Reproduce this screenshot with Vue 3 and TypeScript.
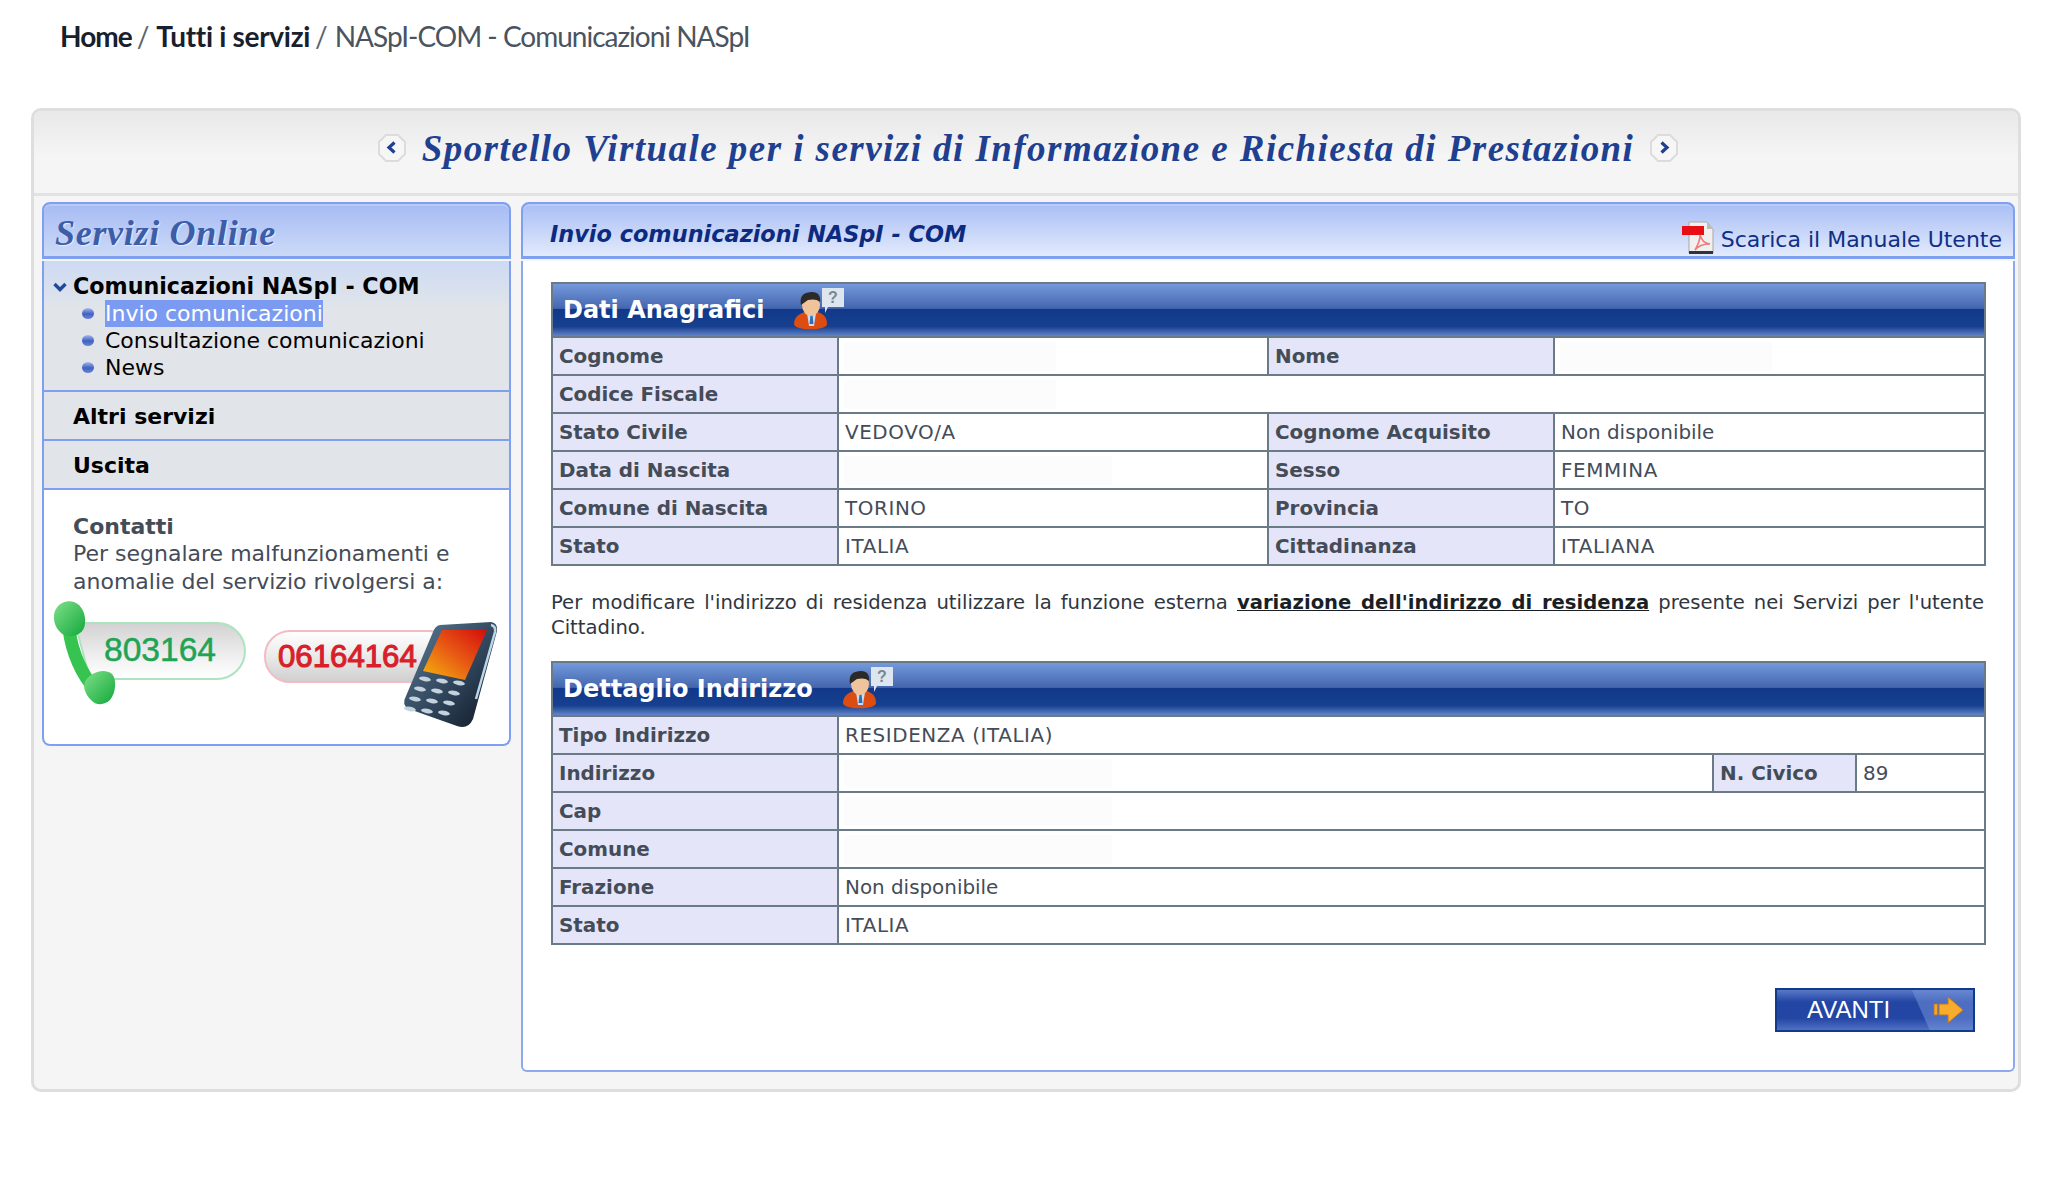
<script setup lang="ts">
interface Cell { t: string; kind: 'label' | 'value' | 'blank'; span?: number; w?: number; caps?: boolean }

const anagrafici: Cell[][] = [
  [{ t: 'Cognome', kind: 'label' }, { t: '', kind: 'blank', w: 212 }, { t: 'Nome', kind: 'label' }, { t: '', kind: 'blank', w: 212 }],
  [{ t: 'Codice Fiscale', kind: 'label' }, { t: '', kind: 'blank', span: 3, w: 212 }],
  [{ t: 'Stato Civile', kind: 'label' }, { t: 'VEDOVO/A', kind: 'value', caps: true }, { t: 'Cognome Acquisito', kind: 'label' }, { t: 'Non disponibile', kind: 'value' }],
  [{ t: 'Data di Nascita', kind: 'label' }, { t: '', kind: 'blank', w: 268 }, { t: 'Sesso', kind: 'label' }, { t: 'FEMMINA', kind: 'value', caps: true }],
  [{ t: 'Comune di Nascita', kind: 'label' }, { t: 'TORINO', kind: 'value', caps: true }, { t: 'Provincia', kind: 'label' }, { t: 'TO', kind: 'value', caps: true }],
  [{ t: 'Stato', kind: 'label' }, { t: 'ITALIA', kind: 'value', caps: true }, { t: 'Cittadinanza', kind: 'label' }, { t: 'ITALIANA', kind: 'value', caps: true }],
]

const indirizzo: Cell[][] = [
  [{ t: 'Tipo Indirizzo', kind: 'label' }, { t: 'RESIDENZA (ITALIA)', kind: 'value', span: 3, caps: true }],
  [{ t: 'Indirizzo', kind: 'label' }, { t: '', kind: 'blank', w: 268 }, { t: 'N. Civico', kind: 'label' }, { t: '89', kind: 'value' }],
  [{ t: 'Cap', kind: 'label' }, { t: '', kind: 'blank', span: 3, w: 268 }],
  [{ t: 'Comune', kind: 'label' }, { t: '', kind: 'blank', span: 3, w: 268 }],
  [{ t: 'Frazione', kind: 'label' }, { t: 'Non disponibile', kind: 'value', span: 3 }],
  [{ t: 'Stato', kind: 'label' }, { t: 'ITALIA', kind: 'value', span: 3, caps: true }],
]

const keys: { x: number; y: number }[] = []
for (let r = 0; r < 4; r++) {
  for (let c = 0; c < 3; c++) {
    keys.push({ x: 380 + c * 17 - r * 5, y: 80 + c * 2 + r * 10 })
  }
}
</script>

<template>
  <div class="page">
    <nav class="crumbs">
      <strong class="home">Home</strong><span class="sep">/</span>
      <strong class="all">Tutti i servizi</strong><span class="sep">/</span>
      <span class="current">NASpI-COM - Comunicazioni NASpI</span>
    </nav>

    <div class="shell">
      <header class="banner">
        <svg class="nub" viewBox="0 0 28 28">
          <path d="M8 1h12l7 7v12l-7 7H8l-7-7V8z" fill="#f6f6f6" stroke="#dcdcdc" stroke-width="2" />
          <path d="M16.5 8.5 11 13.5l5.500 5" fill="none" stroke="#1f3f90" stroke-width="3.200" />
        </svg>
        <h1>Sportello Virtuale per i servizi di Informazione e Richiesta di Prestazioni</h1>
        <svg class="nub" viewBox="0 0 28 28">
          <path d="M8 1h12l7 7v12l-7 7H8l-7-7V8z" fill="#f6f6f6" stroke="#dcdcdc" stroke-width="2" />
          <path d="M11.500 8.500 17 13.500l-5.500 5" fill="none" stroke="#1f3f90" stroke-width="3.200" />
        </svg>
      </header>

      <div class="columns">
        <aside class="side">
          <div class="side-head">Servizi Online</div>
          <div class="menu">
            <div class="menu-block first">
              <div class="menu-title">
                <svg class="chev" viewBox="0 0 14 10">
                  <path d="M1.500 2 7 7.500 12.500 2" fill="none" stroke="#1f4a9a" stroke-width="3.400" />
                </svg>
                Comunicazioni NASpI - COM
              </div>
              <ul class="sub">
                <li><i class="dot"></i><span class="selected">Invio comunicazioni</span></li>
                <li><i class="dot"></i><span>Consultazione comunicazioni</span></li>
                <li><i class="dot"></i><span>News</span></li>
              </ul>
            </div>
            <div class="menu-block item">Altri servizi</div>
            <div class="menu-block item">Uscita</div>
          </div>
          <div class="contacts">
            <div class="contact-text">
              <strong>Contatti</strong><br />
              Per segnalare malfunzionamenti e<br />
              anomalie del servizio rivolgersi a:
            </div>
            <svg class="phones" viewBox="0 0 460 135">
              <defs>
                <linearGradient id="pill" x1="0" y1="0" x2="0" y2="1">
                  <stop offset="0" stop-color="#d2d2d2" />
                  <stop offset="0.7" stop-color="#f4f4f4" />
                  <stop offset="1" stop-color="#ffffff" />
                </linearGradient>
                <linearGradient id="pillr" x1="0" y1="0" x2="0" y2="1">
                  <stop offset="0" stop-color="#ffffff" />
                  <stop offset="0.45" stop-color="#ececec" />
                  <stop offset="1" stop-color="#cfcfcf" />
                </linearGradient>
                <linearGradient id="gr" x1="0" y1="0" x2="1" y2="1">
                  <stop offset="0" stop-color="#7fe088" />
                  <stop offset="1" stop-color="#12a83c" />
                </linearGradient>
                <linearGradient id="scr" x1="1" y1="0" x2="0" y2="1">
                  <stop offset="0" stop-color="#d40d0d" />
                  <stop offset="0.5" stop-color="#e85a14" />
                  <stop offset="1" stop-color="#f5b70c" />
                </linearGradient>
                <linearGradient id="body" x1="0" y1="0" x2="1" y2="1">
                  <stop offset="0" stop-color="#5e7f98" />
                  <stop offset="0.6" stop-color="#2c4056" />
                  <stop offset="1" stop-color="#0e1620" />
                </linearGradient>
              </defs>
              <path d="M30 24H172A28 28 0 0 1 172 80H45z" fill="url(#pill)" stroke="#aee3bf" stroke-width="2" />
              <text x="59" y="62" class="n-green">803164</text>
              <path d="M24 30C27 54 37 76 50 90" fill="none" stroke="#35c44f" stroke-width="13" />
              <path d="M9 16C10 6 20 0 29 3c8 3 12 12 11 22-1 9-9 13-18 12C14 35 8 26 9 16z" fill="url(#gr)" />
              <path d="M41 81c6-8 18-12 26-6 5 5 4 19-2 26-5 5-14 6-19 0-6-6-9-14-5-20z" fill="url(#gr)" />
              <rect x="220" y="32" width="190" height="51" rx="25" fill="url(#pillr)" stroke="#f3bcc4" stroke-width="2" />
              <text x="233" y="68" class="n-red">06164164</text>
              <path d="M395 26 446 23Q453 24 452 32L428 120Q423 131 412 127L364 110Q356 106 361 97L388 33Q390 27 395 26z" fill="url(#body)" />
              <path d="M446 26Q451 27 450 33L431 100" fill="none" stroke="#bcd6e6" stroke-width="2.500" />
              <path d="M397 31 442 31 420 81 378 72z" fill="url(#scr)" />
              <ellipse
                v-for="(k, i) in keys"
                :key="i"
                :cx="k.x"
                :cy="k.y"
                rx="6"
                ry="2.300"
                fill="#c4d2de"
                :transform="`rotate(10 ${k.x} ${k.y})`"
              />
            </svg>
          </div>
        </aside>

        <main class="main">
          <div class="main-head">
            <span class="main-title">Invio comunicazioni NASpI - COM</span>
            <a class="manual">
              <svg class="pdf" viewBox="0 0 32 33">
                <path d="M7 1h18l6 7v24H7z" fill="#f0f0f0" stroke="#a8a8a8" />
                <path d="M25 1l6 7h-6z" fill="#bdbdbd" />
                <rect x="7" y="30" width="24" height="3" fill="#333" />
                <rect x="0" y="5" width="22" height="9" fill="#e80f14" />
                <path d="M13 29c3-5 5-10 5-15 2 6 4 8 10 9-6 0-12 2-15 6z" fill="none" stroke="#f07a7a" stroke-width="1.600" />
              </svg>
              Scarica il Manuale Utente
            </a>
          </div>

          <div class="main-body">
            <table class="grid">
              <colgroup><col class="c1" /><col class="c2" /><col class="c3" /><col class="c4" /></colgroup>
              <thead>
                <tr>
                  <th colspan="4" class="bar">
                    <div class="bar-inner">
                      <span>Dati Anagrafici</span>
                      <svg class="person" viewBox="0 0 52 42">
                        <path d="M28 0h22v19H34l-3 6 0-6h-3z" fill="#dde6ee" />
                        <text x="39" y="15" class="q">?</text>
                        <path d="M0 36c0-8 7-11 11-12h12c5 1 10 4 10 12 0 7-33 7-33 0z" fill="#dd4d12" />
                        <path d="M13 25h9l-2 13h-5z" fill="#c9dcf0" />
                        <path d="M16.500 27h2l1 9h-4z" fill="#2f6fb8" />
                        <ellipse cx="17" cy="17" rx="9" ry="11" fill="#f0c49a" />
                        <path d="M7 17C5 7 11 4 18 4c6 0 9 4 8 10-3-3-8-3-12-2-2 1-4 3-7 5z" fill="#2c2a28" />
                      </svg>
                    </div>
                  </th>
                </tr>
              </thead>
              <tbody>
                <tr v-for="(row, r) in anagrafici" :key="r">
                  <td v-for="(c, i) in row" :key="i" :colspan="c.span" :class="[c.kind, { caps: c.caps }]">
                    <div v-if="c.kind === 'blank'" class="patch" :style="{ width: c.w + 'px' }"></div>
                    <template v-else>{{ c.t }}</template>
                  </td>
                </tr>
              </tbody>
            </table>

            <div class="note">
              <p class="note-first">
                Per modificare l'indirizzo di residenza utilizzare la funzione esterna
                <a>variazione dell'indirizzo di residenza</a>
                presente nei Servizi per l'utente
              </p>
              <p>Cittadino.</p>
            </div>

            <table class="grid">
              <colgroup><col class="c1" /><col class="d2" /><col class="d3" /><col class="d4" /></colgroup>
              <thead>
                <tr>
                  <th colspan="4" class="bar">
                    <div class="bar-inner">
                      <span>Dettaglio Indirizzo</span>
                      <svg class="person" viewBox="0 0 52 42">
                        <path d="M28 0h22v19H34l-3 6 0-6h-3z" fill="#dde6ee" />
                        <text x="39" y="15" class="q">?</text>
                        <path d="M0 36c0-8 7-11 11-12h12c5 1 10 4 10 12 0 7-33 7-33 0z" fill="#dd4d12" />
                        <path d="M13 25h9l-2 13h-5z" fill="#c9dcf0" />
                        <path d="M16.500 27h2l1 9h-4z" fill="#2f6fb8" />
                        <ellipse cx="17" cy="17" rx="9" ry="11" fill="#f0c49a" />
                        <path d="M7 17C5 7 11 4 18 4c6 0 9 4 8 10-3-3-8-3-12-2-2 1-4 3-7 5z" fill="#2c2a28" />
                      </svg>
                    </div>
                  </th>
                </tr>
              </thead>
              <tbody>
                <tr v-for="(row, r) in indirizzo" :key="r">
                  <td v-for="(c, i) in row" :key="i" :colspan="c.span" :class="[c.kind, { caps: c.caps }]">
                    <div v-if="c.kind === 'blank'" class="patch" :style="{ width: c.w + 'px' }"></div>
                    <template v-else>{{ c.t }}</template>
                  </td>
                </tr>
              </tbody>
            </table>

            <div class="actions">
              <button class="next" type="button">
                <span>AVANTI</span>
                <svg class="arrow" viewBox="0 0 32 28">
                  <path d="M6 8h9V1l15 13-15 13v-8H6z" fill="#f9ab2c" stroke="#b8752a" stroke-width="1" />
                  <rect x="1" y="8" width="3.500" height="11" fill="#f4a62a" stroke="#b8752a" stroke-width="0.800" />
                </svg>
              </button>
            </div>
          </div>
        </main>
      </div>
    </div>
  </div>
</template>

<style scoped>
.page {
  width: 2050px;
  min-height: 1186px;
  background: #fff;
  font-family: "DejaVu Sans", Verdana, sans-serif;
  color: #444c58;
}
.crumbs {
  height: 108px;
  box-sizing: border-box;
  padding: 16px 0 0 60px;
  font-family: Lato, sans-serif;
  font-size: 28px;
  line-height: 40px;
  color: #17202c;
  white-space: nowrap;
}
.crumbs strong { font-weight: 700; }
.crumbs .home { letter-spacing: -1px; }
.crumbs .all { letter-spacing: -0.3px; }
.crumbs .sep { color: #5a6470; margin: 0 7px 0 5px; font-weight: 400; }
.crumbs .current { color: #4a5460; letter-spacing: -1px; }

.shell {
  margin-left: 31px;
  width: 1990px;
  height: 984px;
  box-sizing: border-box;
  border: 3px solid #dedede;
  border-radius: 10px;
  background: #f5f5f5;
  overflow: hidden;
}
.banner {
  height: 85px;
  box-sizing: border-box;
  border-bottom: 3px solid #e2e2e2;
  background: linear-gradient(#e8e8e8, #f5f5f5 55%);
  display: flex;
  align-items: center;
  justify-content: center;
  gap: 16px;
  padding: 0 0 8px 4px;
}
.nub { width: 28px; height: 28px; }
.banner h1 {
  margin: 0;
  font-family: "Liberation Serif", serif;
  font-style: italic;
  font-weight: 700;
  font-size: 37px;
  letter-spacing: 1.450px;
  color: #1f3f90;
  white-space: nowrap;
}
.columns {
  display: flex;
  gap: 10px;
  padding: 6px 2px 0 8px;
  align-items: flex-start;
}
.side { width: 469px; flex: none; }
.side-head {
  height: 57px;
  box-sizing: border-box;
  border: 2px solid #7f9ff0;
  border-bottom-width: 3px;
  border-radius: 8px 8px 0 0;
  background: linear-gradient(#a6bbf4, #ccdaf7);
  box-shadow: inset 0 2px 0 #b9caf6;
  font-family: "Liberation Serif", serif;
  font-style: italic;
  font-weight: 700;
  font-size: 36px;
  line-height: 59px;
  padding-left: 11px;
  color: #3d5da8;
  letter-spacing: 0.700px;
  text-shadow: 1px 1px 1px #e8eefc;
}
.menu {
  margin-top: 2px;
  border-left: 2px solid #7f9ff0;
  border-right: 2px solid #7f9ff0;
  color: #000;
  font-size: 22px;
}
.menu-block { border-bottom: 2px solid #7f9ff0; background: #e1e5e9; }
.menu-block.first {
  height: 131px;
  box-sizing: border-box;
  padding: 12px 0 0 29px;
  background: linear-gradient(#cddaf4, #e1e5e9 48px);
  line-height: 27px;
}
.menu-title { font-weight: 700; font-size: 22.200px; position: relative; }
.chev { position: absolute; left: -20px; top: 9px; width: 14px; height: 10px; }
.sub { list-style: none; margin: 0; padding: 0 0 0 32px; }
.sub li { display: flex; align-items: center; height: 27px; position: relative; }
.dot {
  position: absolute;
  left: -23px;
  top: 8px;
  width: 12px;
  height: 11px;
  border-radius: 50%;
  background: linear-gradient(#a5b8f2, #3f5fc0 55%, #6e88d8);
}
.selected { background: #7b9bf2; color: #fff; }
.item {
  height: 49px;
  box-sizing: border-box;
  padding-left: 29px;
  font-weight: 700;
  line-height: 50px;
}
.contacts {
  height: 256px;
  box-sizing: border-box;
  background: #fff;
  border: 2px solid #7f9ff0;
  border-top: 0;
  border-radius: 0 0 8px 8px;
  padding-top: 23px;
}
.contact-text {
  padding-left: 29px;
  font-size: 22px;
  line-height: 27.400px;
}
.phones { display: block; width: 460px; height: 135px; margin: 4px 0 0 1px; }
.n-green { font: 400 33.600px "Liberation Sans", sans-serif; fill: #1fa355; stroke: #1fa355; stroke-width: 0.500px; }
.n-red { font: 400 31.200px "Liberation Sans", sans-serif; fill: #d81f2a; stroke: #d81f2a; stroke-width: 1.100px; }

.main { width: 1494px; flex: none; }
.main-head {
  height: 57px;
  box-sizing: border-box;
  border: 2px solid #7f9ff0;
  border-bottom-width: 3px;
  border-radius: 8px 8px 0 0;
  background: linear-gradient(#a9bef5, #e2eafc);
  box-shadow: inset 0 2px 0 #b9caf6;
  display: flex;
  justify-content: space-between;
  padding: 0 11px 0 27px;
  color: #0f2f86;
}
.main-title {
  font-weight: 700;
  font-style: italic;
  font-size: 22.400px;
  line-height: 60px;
  color: #0c2a80;
}
.manual {
  font-size: 22px;
  display: flex;
  align-items: flex-end;
  gap: 7px;
  padding-bottom: 2px;
  line-height: 28px;
}
.pdf { width: 32px; height: 33px; margin-bottom: 0; }
.main-body {
  height: 811px;
  box-sizing: border-box;
  margin-top: 2px;
  background: #fff;
  border: 2px solid #8fa9f0;
  border-top: 0;
  border-radius: 0 0 6px 6px;
  padding: 21px 29px 0 28px;
}
.grid {
  width: 1433px;
  table-layout: fixed;
  border-collapse: collapse;
  font-size: 19.900px;
}
.c1 { width: 286px; }
.c2 { width: 430px; }
.c3 { width: 286px; }
.c4 { width: 431px; }
.d2 { width: 875px; }
.d3 { width: 143px; }
.d4 { width: 129px; }
.grid td {
  border: 2px solid #6a7a87;
  height: 36px;
  padding: 0 0 0 6px;
  box-sizing: content-box;
  white-space: nowrap;
}
.grid td.label { background: #e4e5f8; font-weight: 700; }
.grid td.blank { padding-left: 5px; }
.grid td.caps { letter-spacing: 0.600px; }
.patch { height: 29px; background: #fcfcfc; }
.bar {
  height: 52px;
  padding: 0 0 0 10px;
  border: 2px solid #6a7a87;
  background: linear-gradient(#7499dc, #4466ad 47%, #11388a 48%, #17408f 82%, #6284c8);
  color: #fff;
  text-align: left;
  font-size: 24px;
  font-weight: 700;
}
.bar-inner { display: flex; align-items: center; gap: 30px; height: 52px; }
.person { width: 52px; height: 42px; margin-top: -3px; }
.q { font: 700 16px "Liberation Sans", sans-serif; fill: #7a8794; text-anchor: middle; }
.note {
  padding: 24px 0 0;
  font-size: 19.600px;
  line-height: 25px;
  color: #2f3640;
  height: 95px;
  box-sizing: border-box;
}
.note p { margin: 0; }
.note-first { text-align: justify; text-align-last: justify; white-space: nowrap; }
.note a { font-weight: 700; color: #1a1f26; text-decoration: underline; }
.actions { display: flex; justify-content: flex-end; padding: 43px 9px 0 0; }
.next {
  width: 200px;
  height: 44px;
  box-sizing: border-box;
  border: 2px solid #113a8a;
  padding: 0 8px 0 30px;
  display: flex;
  align-items: center;
  justify-content: space-between;
  background:
    linear-gradient(66deg, transparent 139px, rgba(120, 150, 220, 0.500) 140px),
    linear-gradient(#5878c8, #2346a4 30%, #2346a4 70%, #5070c4);
  color: #fff;
  font-family: "Liberation Sans", sans-serif;
  font-size: 24px;
}
.arrow { width: 32px; height: 28px; }
</style>

<style>
html, body { margin: 0; background: #fff; }
</style>
